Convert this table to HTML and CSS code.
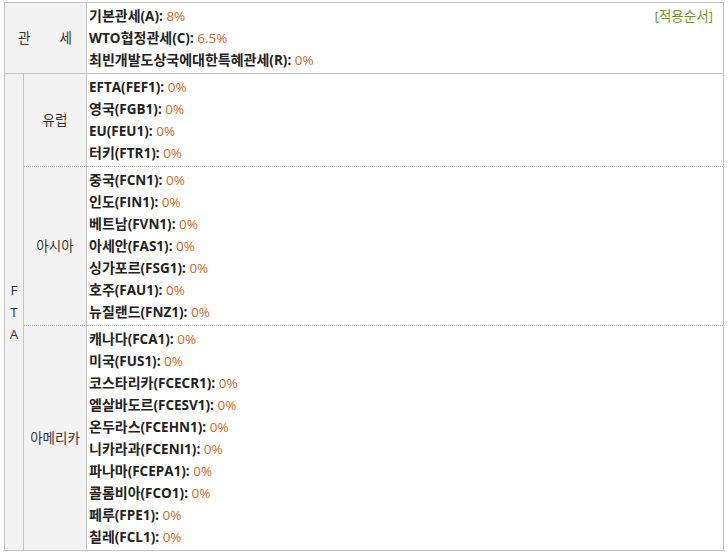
FILE: index.html
```html
<!DOCTYPE html>
<html lang="ko">
<head>
<meta charset="utf-8">
<title>관세율</title>
<link rel="stylesheet" href="styles.css">
</head>
<body>
<div class="tariff">
  <div class="head-label"><span>관</span><span>세</span></div>
  <div class="list head-list">
    <div class="order">[적용순서]</div>
    <div class="item"><b><span class="ko">기본관세</span>(A):</b> <span class="rate">8%</span></div>
    <div class="item"><b>WTO<span class="ko">협정관세</span>(C):</b> <span class="rate">6.5%</span></div>
    <div class="item"><b><span class="ko">최빈개발도상국에대한특혜관세</span>(R):</b> <span class="rate">0%</span></div>
  </div>

  <div class="fta-label">F<br>T<br>A</div>

  <div class="region r1">유럽</div>
  <div class="list r1">
    <div class="item"><b>EFTA(FEF1):</b> <span class="rate">0%</span></div>
    <div class="item"><b><span class="ko">영국</span>(FGB1):</b> <span class="rate">0%</span></div>
    <div class="item"><b>EU(FEU1):</b> <span class="rate">0%</span></div>
    <div class="item"><b><span class="ko">터키</span>(FTR1):</b> <span class="rate">0%</span></div>
  </div>

  <div class="region r2 dotted">아시아</div>
  <div class="list r2 dotted">
    <div class="item"><b><span class="ko">중국</span>(FCN1):</b> <span class="rate">0%</span></div>
    <div class="item"><b><span class="ko">인도</span>(FIN1):</b> <span class="rate">0%</span></div>
    <div class="item"><b><span class="ko">베트남</span>(FVN1):</b> <span class="rate">0%</span></div>
    <div class="item"><b><span class="ko">아세안</span>(FAS1):</b> <span class="rate">0%</span></div>
    <div class="item"><b><span class="ko">싱가포르</span>(FSG1):</b> <span class="rate">0%</span></div>
    <div class="item"><b><span class="ko">호주</span>(FAU1):</b> <span class="rate">0%</span></div>
    <div class="item"><b><span class="ko">뉴질랜드</span>(FNZ1):</b> <span class="rate">0%</span></div>
  </div>

  <div class="region r3 dotted">아메리카</div>
  <div class="list r3 dotted">
    <div class="item"><b><span class="ko">캐나다</span>(FCA1):</b> <span class="rate">0%</span></div>
    <div class="item"><b><span class="ko">미국</span>(FUS1):</b> <span class="rate">0%</span></div>
    <div class="item"><b><span class="ko">코스타리카</span>(FCECR1):</b> <span class="rate">0%</span></div>
    <div class="item"><b><span class="ko">엘살바도르</span>(FCESV1):</b> <span class="rate">0%</span></div>
    <div class="item"><b><span class="ko">온두라스</span>(FCEHN1):</b> <span class="rate">0%</span></div>
    <div class="item"><b><span class="ko">니카라과</span>(FCENI1):</b> <span class="rate">0%</span></div>
    <div class="item"><b><span class="ko">파나마</span>(FCEPA1):</b> <span class="rate">0%</span></div>
    <div class="item"><b><span class="ko">콜롬비아</span>(FCO1):</b> <span class="rate">0%</span></div>
    <div class="item"><b><span class="ko">페루</span>(FPE1):</b> <span class="rate">0%</span></div>
    <div class="item"><b><span class="ko">칠레</span>(FCL1):</b> <span class="rate">0%</span></div>
  </div>
</div>
</body>
</html>
```

FILE: styles.css
```css
html, body {
  margin: 0;
  padding: 0;
  background: #fff;
}

body {
  font-family: "Open Sans", "Noto Sans CJK KR", sans-serif;
  font-size: 13.5px;
  line-height: 22px;
  color: #222;
}

.tariff {
  display: grid;
  grid-template-columns: 19px 63px 1fr;
  grid-template-rows: auto auto auto auto;
  width: 720px;
  box-sizing: border-box;
  margin: 2px 0 0 4px;
  border: 1px solid #c3c3c3;
}

.head-label {
  grid-column: 1 / span 2;
  grid-row: 1;
  background: #f3f3f3;
  border-right: 1px solid #c3c3c3;
  border-bottom: 1px solid #c3c3c3;
  display: flex;
  align-items: center;
  justify-content: center;
  gap: 29px;
  color: #333;
  padding-right: 1px;
}

.head-list {
  grid-column: 3;
  grid-row: 1;
  border-bottom: 1px solid #c3c3c3;
  position: relative;
}

.order {
  position: absolute;
  top: 2px;
  right: 10px;
  color: #6f9a12;
}

.fta-label {
  grid-column: 1;
  grid-row: 2 / span 3;
  background: #f3f3f3;
  border-right: 1px solid #c3c3c3;
  display: flex;
  align-items: center;
  justify-content: center;
  text-align: center;
  color: #333;
}

.region {
  grid-column: 2;
  background: #f3f3f3;
  border-right: 1px solid #c3c3c3;
  display: flex;
  align-items: center;
  justify-content: center;
  color: #333;
}

.list {
  grid-column: 3;
  padding: 2px 2px;
}

.r1 { grid-row: 2; }
.r2 { grid-row: 3; }
.r3 { grid-row: 4; }

.dotted {
  border-top: 1px dotted #aaa;
}

.item b {
  font-weight: bold;
  color: #222;
}

.ko {
  font-size: 14px;
}

.rate {
  color: #cf6a1c;
}
```
